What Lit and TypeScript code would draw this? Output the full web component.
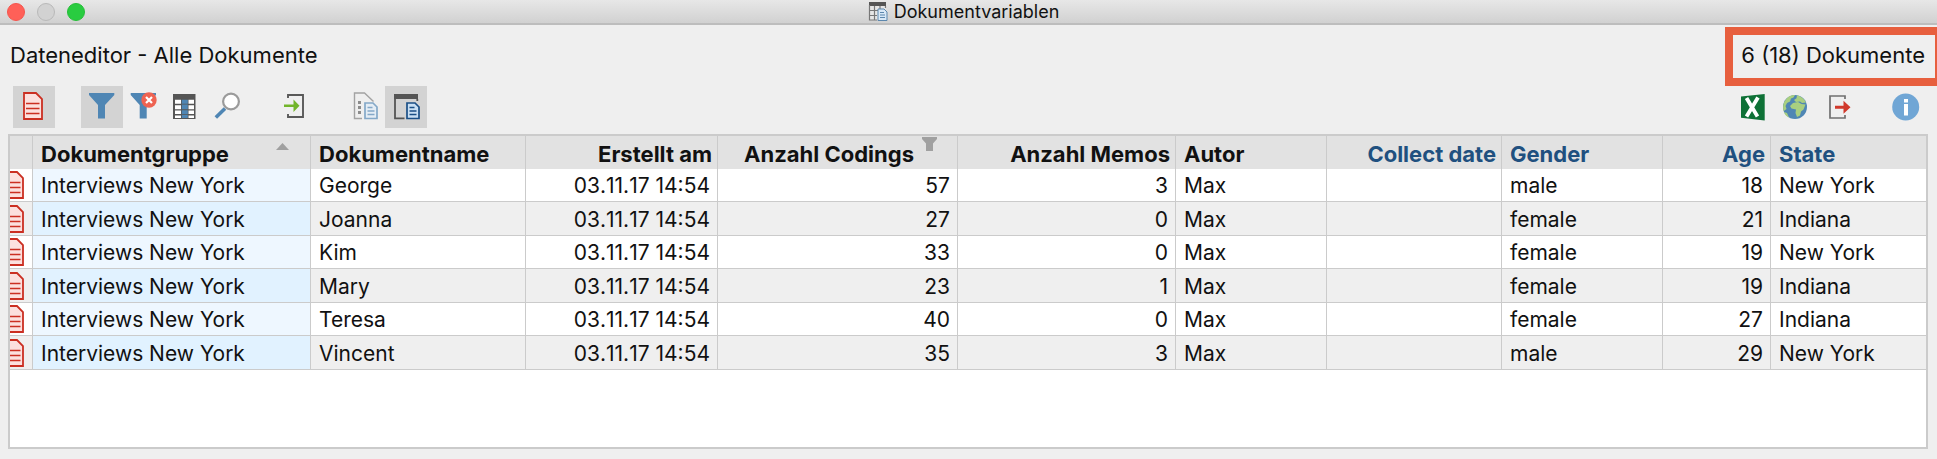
import { LitElement, html, svg, css, nothing } from "lit";
import { customElement, property } from "lit/decorators.js";
import { classMap } from "lit/directives/class-map.js";

const smallDoc = (stroke: string, fill: string) => svg`
  <path d="M22 17h8l4 4v11.500h-12z" fill=${fill} stroke=${stroke} stroke-width="1.700"/>
  <path d="M24.500 21.500h5M24.500 25h7M24.500 28.500h7" stroke=${stroke} stroke-width="1.400"/>`;

const icons: Record<string, unknown> = {
  document: svg`
    <path d="M11 7h12l6 6v20H11z" fill="#fce0de" stroke="#cb2f22" stroke-width="1.800"/>
    <path d="M13 17.500h13.500M13 22.500h13.500M13 27.500h13.500" stroke="#cb2f22" stroke-width="1.600"/>`,
  filter: svg`<path d="M8 7h25.300v2L24 19v13.500h-7V19L8 9z" fill="#4f86b4"/>`,
  filterReset: svg`
    <path d="M7.700 7H33v2l-9.300 10v13.500h-7V19l-9-10z" fill="#4f86b4"/>
    <circle cx="26" cy="14" r="7.700" fill="#ee6352"/>
    <path d="M23 11l6 6M29 11l-6 6" stroke="#fff" stroke-width="2.200"/>`,
  columns: svg`
    <path d="M8 8h22.500v25H8z" fill="#555"/>
    <path d="M10 13.700h6v4h-6zM10 19.300h6v4h-6zM10 24.500h6v3.500h-6zM10 29.500h6v2.500h-6zM23.500 13.700h5.500v4h-5.500zM23.500 19.300h5.500v4h-5.500zM23.500 24.500h5.500v3.500h-5.500zM23.500 29.500h5.500v2.500h-5.500z" fill="#fff"/>
    <path d="M16.800 13.700h6v4h-6zM16.800 18.600h6v4.700h-6zM16.800 24.200h6v4h-6zM16.800 29h6v3h-6z" fill="#4f86b4"/>`,
  search: svg`
    <path d="M18 22.500L8.800 31.500" stroke="#4f86b4" stroke-width="3.600"/>
    <circle cx="24" cy="15.500" r="7.900" fill="#fff" stroke="#9b9b9b" stroke-width="2.200"/>`,
  importData: svg`
    <path d="M13 12V9h15v22H13v-3" fill="none" stroke="#595959" stroke-width="1.900"/>
    <path d="M9 18.500h9.500v-5l6 6.200-6 6.300v-5H9z" fill="#72b52a"/>`,
  documentVariables: svg`
    <path d="M19 32.500h-7.500V7h10l9 8.500" fill="none" stroke="#a3a3a3" stroke-width="1.400"/>
    <path d="M15 15h3v3h-3zM15 20h3v3h-3zM15 25h3v3h-3z" fill="#8c8c8c"/>
    ${smallDoc("#84a8c8", "#e4edf5")}`,
  dataEditor: svg`
    <path d="M9 8h24v5H9z" fill="#555"/>
    <path d="M10 12v20.300h9.500M32.300 13v2" fill="none" stroke="#555" stroke-width="1.800"/>
    ${smallDoc("#1a4f86", "#c9dff3")}`,
  excel: svg`
    <path d="M9 10.500L32.700 8v26.600L9 31.700z" fill="#0e7136"/>
    <path d="M14.500 12l11 18.500M26 11.500L14.500 30.500" stroke="#fff" stroke-width="3.800"/>`,
  web: svg`
    <circle cx="21" cy="21" r="12" fill="#4f86b4"/>
    <path d="M12 13.200q4-4.500 9-4.200l-1.500 2.500-2.500 1-1 3-3 1.500-1.500 3 1 3-2 1.500-1 .500q-1.500-7 2.500-11.800z" fill="#a9cf80"/>
    <path d="M23 9.200q6 1.300 9 7.300l-4 .500-2-1.500-4 .500-2-2 2.500-1.800z" fill="#a9cf80"/>
    <path d="M19 17l5-1 3.500 2 4 .500-2 5-2.500 2-1 4-3 1.500-1.500-4 .500-3.500-4.500-1-1.500-2.500z" fill="#a9cf80"/>
    <path d="M10 26l3 1 2 4.500q-4-2-5-5.500z" fill="#a9cf80"/>`,
  exportData: svg`
    <path d="M29 13v-3H14v22h15v-3" fill="none" stroke="#707070" stroke-width="1.700"/>
    <path d="M19 19.800h8.500v-5l7 6.500-7 6.500v-5H19z" fill="#d0392b"/>`,
  info: svg`
    <circle cx="21.700" cy="21" r="13.500" fill="#70a6d5"/>
    <path d="M20 13h4v3.500h-4zM20 18h4v11.500h-4z" fill="#fff"/>`,
};

@customElement("tool-button")
class ToolButton extends LitElement {
  @property() icon = "";
  @property() label = "";
  @property({ type: Boolean }) active = false;

  static styles = css`
    :host { display: block; }
    .button {
      display: block;
      width: 42px;
      height: 42px;
      padding: 0;
      border: 0;
      background: transparent;
    }
    .button.active { background: #d3d3d3; }
    .glyph { display: block; width: 42px; height: 42px; }
  `;

  render() {
    return html`<button
      class=${classMap({ button: true, active: this.active })}
      type="button"
      title=${this.label}
      aria-label=${this.label}
    ><svg class="glyph" viewBox="0 0 42 42" aria-hidden="true">${icons[this.icon]}</svg></button>`;
  }
}

interface Column {
  key: string;
  title: string;
  end?: boolean;
  custom?: boolean;
  mark?: "sort" | "filter";
}

const columns: Column[] = [
  { key: "group", title: "Dokumentgruppe", mark: "sort" },
  { key: "name", title: "Dokumentname" },
  { key: "created", title: "Erstellt am", end: true },
  { key: "codings", title: "Anzahl Codings", end: true, mark: "filter" },
  { key: "memos", title: "Anzahl Memos", end: true },
  { key: "author", title: "Autor" },
  { key: "collect", title: "Collect date", end: true, custom: true },
  { key: "gender", title: "Gender", custom: true },
  { key: "age", title: "Age", end: true, custom: true },
  { key: "state", title: "State", custom: true },
];

const row = (name: string, codings: number, memos: number, gender: string, age: number, state: string) => ({
  group: "Interviews New York",
  name,
  created: "03.11.17 14:54",
  codings,
  memos,
  author: "Max",
  collect: "",
  gender,
  age,
  state,
});

const rows: Record<string, string | number>[] = [
  row("George", 57, 3, "male", 18, "New York"),
  row("Joanna", 27, 0, "female", 21, "Indiana"),
  row("Kim", 33, 0, "female", 19, "New York"),
  row("Mary", 23, 1, "female", 19, "Indiana"),
  row("Teresa", 40, 0, "female", 27, "Indiana"),
  row("Vincent", 35, 3, "male", 29, "New York"),
];

@customElement("variable-table")
class VariableTable extends LitElement {
  static styles = css`
    :host { display: block; }
    .table {
      width: 100%;
      table-layout: fixed;
      border-collapse: separate;
      border-spacing: 0;
      line-height: 26px;
    }
    .col-icon { width: 23px; }
    .col-group { width: 278px; }
    .col-name { width: 215px; }
    .col-created { width: 192px; }
    .col-codings { width: 240px; }
    .col-memos { width: 218px; }
    .col-author { width: 151px; }
    .col-collect { width: 175px; }
    .col-gender { width: 161px; }
    .col-age { width: 108px; }
    .head, .cell {
      box-sizing: border-box;
      padding: 2px 7px 0 8px;
      border-right: 1px solid #cbcbcb;
      text-align: left;
      white-space: nowrap;
      overflow: hidden;
    }
    .head {
      height: 33px;
      padding-right: 5px;
      background: #e2e2e2;
      font-size: 22px;
      font-weight: 700;
    }
    .head.custom { color: #20507f; }
    .head.end, .cell.end { text-align: right; }
    .cell {
      border-bottom: 1px solid #cbcbcb;
      background: #fff;
    }
    .cell.end { font-kerning: none; }
    .head:last-child, .cell:last-child { border-right: 0; }
    .row { height: 33px; }
    .row:nth-child(even) { height: 34px; }
    .row:nth-child(even) .cell { background: #efefef; }
    .cell.group { background: #eef7ff; }
    .row:nth-child(even) .cell.group { background: #e1f2ff; }
    .cell.icon, .head.icon { padding: 0; }
    .rowicon { display: block; width: 14px; height: 28px; }
    .caption { display: flex; align-items: center; justify-content: space-between; }
    .end .caption { justify-content: flex-end; gap: 8px; padding-right: 15px; }
    .sort { width: 13px; height: 7px; margin: 0 16px 14px 0; }
    .filter { width: 15px; height: 14px; margin-bottom: 18px; margin-top: -2px; }
  `;

  private mark(c: Column) {
    if (c.mark === "sort")
      return html`<svg class="sort" viewBox="0 0 13 7" aria-hidden="true"><path d="M6.500 0L13 7H0z" fill="#a0a0a0"/></svg>`;
    if (c.mark === "filter")
      return html`<svg class="filter" viewBox="0 0 15 14" aria-hidden="true"><path d="M0 0h15v2l-4 4.500V14H4V6.500L0 2z" fill="#a0a0a0"/></svg>`;
    return nothing;
  }

  render() {
    return html`
      <table class="table">
        <colgroup>
          <col class="col-icon" />
          ${columns.map((c) => html`<col class="col-${c.key}" />`)}
        </colgroup>
        <thead>
          <tr>
            <th class="head icon" aria-label="Symbol"></th>
            ${columns.map(
              (c) => html`<th
                scope="col"
                class=${classMap({ head: true, end: !!c.end, custom: !!c.custom })}
              >${c.mark ? html`<div class="caption"><span>${c.title}</span>${this.mark(c)}</div>` : c.title}</th>`
            )}
          </tr>
        </thead>
        <tbody>
          ${rows.map(
            (r) => html`<tr class="row">
              <td class="cell icon">
                <svg class="rowicon" viewBox="16 6 14 28" aria-hidden="true">${icons.document}</svg>
              </td>
              ${columns.map(
                (c) => html`<td
                  class=${classMap({ cell: true, end: !!c.end, group: c.key === "group" })}
                >${r[c.key]}</td>`
              )}
            </tr>`
          )}
        </tbody>
      </table>
    `;
  }
}

@customElement("app-root")
class AppRoot extends LitElement {
  static styles = css`
    :host {
      display: flex;
      flex-direction: column;
      box-sizing: border-box;
      min-height: 100vh;
      overflow: hidden;
      background: #efefef;
      color: #111;
      font: 21px/26px Inter, "Liberation Sans", sans-serif;
    }
    .titlebar {
      display: grid;
      grid-template-columns: 1fr auto 1fr;
      align-items: center;
      height: 23px;
      border-bottom: 2px solid #bdbdbd;
      background: linear-gradient(#e7e7e7, #d1d1d1);
    }
    .lights { display: flex; gap: 12px; padding-left: 7px; }
    .light {
      box-sizing: border-box;
      width: 18px;
      height: 18px;
      padding: 0;
      border: 1px solid #b9b9b9;
      border-radius: 50%;
      background: #d2d2d2;
    }
    .light.close { border-color: #f5554d; background: #ff6058; }
    .light.zoom { border-color: #25be38; background: #29cc40; }
    .title {
      display: flex;
      align-items: center;
      gap: 6px;
      margin: 0 10px 0 0;
      font-size: 18px;
      font-weight: 400;
      line-height: 23px;
    }
    .titleicon { width: 20px; height: 19px; }
    .summary {
      display: flex;
      align-items: flex-start;
      justify-content: space-between;
      padding-top: 2px;
      font-size: 22px;
    }
    .heading { margin: 0; padding: 15px 0 0 10px; font-size: 22px; font-weight: 400; }
    .count {
      padding: 7px 10px 10px 8px;
      border: 8px solid #e75f3e;
      border-right-width: 2px;
    }
    .toolbar { display: flex; gap: 26px; padding: 0 11px 0 13px; }
    .group { display: flex; }
    .spacer { flex: 1; }
    .panel {
      flex: 1;
      margin: 6px 9px 10px 8px;
      border: 2px solid #cbcbcb;
      background: #fff;
    }
  `;

  render() {
    return html`
      <header class="titlebar">
        <div class="lights">
          <button class="light close" type="button" aria-label="Schließen"></button>
          <button class="light" type="button" aria-label="Minimieren" disabled></button>
          <button class="light zoom" type="button" aria-label="Zoomen"></button>
        </div>
        <h1 class="title">
          <svg class="titleicon" viewBox="0 0 20 19" aria-hidden="true">
            <path d="M1 1h17v17H1z" fill="#e6e6e6" />
            <path d="M1 0h17v4H1z" fill="#555" />
            <path d="M1.500 3v15H9M6.500 4v14M12 4v3M17.500 4v2M1 8.500h9M1 13.500h8" fill="none" stroke="#777" stroke-width="1.200" />
            <path d="M10 7h6l3 3v8.500h-9z" fill="#d8e8f6" stroke="#5c87ad" />
            <path d="M12 10.500h4M12 13h5M12 15.500h5" stroke="#5c87ad" />
          </svg>
          Dokumentvariablen
        </h1>
      </header>
      <section class="summary">
        <h2 class="heading">Dateneditor - Alle Dokumente</h2>
        <div class="count">6 (18) Dokumente</div>
      </section>
      <nav class="toolbar" aria-label="Werkzeuge">
        <div class="group">
          <tool-button icon="document" label="Dokumente" active></tool-button>
        </div>
        <div class="group">
          <tool-button icon="filter" label="Filter" active></tool-button>
          <tool-button icon="filterReset" label="Filter entfernen"></tool-button>
          <tool-button icon="columns" label="Spalten"></tool-button>
          <tool-button icon="search" label="Suchen"></tool-button>
        </div>
        <div class="group">
          <tool-button icon="importData" label="Importieren"></tool-button>
        </div>
        <div class="group">
          <tool-button icon="documentVariables" label="Variablenliste"></tool-button>
          <tool-button icon="dataEditor" label="Dateneditor" active></tool-button>
        </div>
        <div class="spacer"></div>
        <div class="group">
          <tool-button icon="excel" label="Excel"></tool-button>
          <tool-button icon="web" label="Browser"></tool-button>
          <tool-button icon="exportData" label="Exportieren"></tool-button>
        </div>
        <div class="group">
          <tool-button icon="info" label="Info"></tool-button>
        </div>
      </nav>
      <main class="panel"><variable-table></variable-table></main>
    `;
  }
}
